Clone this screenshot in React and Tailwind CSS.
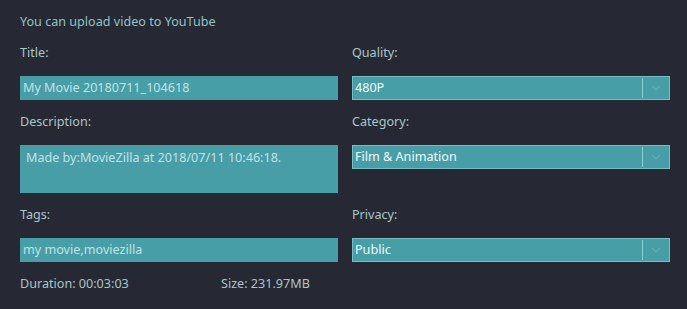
import React from "react";

const font = { fontFamily: '"Noto Sans", "Open Sans", sans-serif' };

function Label({ children }) {
  return (
    <div className="h-[45px] flex items-center text-[12.6px] text-[#a9c6c9]">{children}</div>
  );
}

function Input({ value }) {
  return (
    <div className="bg-[#479ea7] text-[12.6px] text-[#c3e1e3] px-[3px] flex h-[24px] items-center">
      {value}
    </div>
  );
}

function Select({ value }) {
  return (
    <div className="h-[24px] bg-[#479ea7] border border-[#73bfc5] flex items-stretch text-[12.6px] text-[#f2fafa]">
      <div className="flex-1 flex items-center pl-[2px]">{value}</div>
      <div className="w-px bg-[#8ccfd3] my-[1px]" />
      <div className="w-[26px] flex items-center justify-center">
        <svg width="10" height="6" viewBox="0 0 10 6" fill="none">
          <path d="M1 1l4 4 4-4" stroke="#62acb3" strokeWidth="1.2" />
        </svg>
      </div>
    </div>
  );
}

export default function App() {
  return (
    <div style={font} className="w-[687px] h-[309px] bg-[#262934] overflow-hidden pl-[20px] pr-[17px]">
      <div className="h-[31px] pt-[14px] text-[12.6px] leading-[16px] text-[#8fc4c8]">
        You can upload video to YouTube
      </div>
      <div className="flex gap-[14px]">
        <div className="w-[318px] flex flex-col">
          <Label>Title:</Label>
          <Input value="My Movie 20180711_104618" />
          <Label>Description:</Label>
          <div className="h-[48px] bg-[#479ea7] text-[12.6px] text-[#c3e1e3] px-[6px] pt-[4px]">
            Made by:MovieZilla at 2018/07/11 10:46:18.
          </div>
          <Label>Tags:</Label>
          <Input value="my movie,moviezilla" />
        </div>
        <div className="w-[318px] flex flex-col">
          <Label>Quality:</Label>
          <Select value="480P" />
          <Label>Category:</Label>
          <div className="h-[48px]">
            <Select value="Film & Animation" />
          </div>
          <Label>Privacy:</Label>
          <Select value="Public" />
        </div>
      </div>
      <div className="h-[44px] flex items-center text-[12.6px] text-[#a9c6c9]">
        <div className="w-[201px]">Duration: 00:03:03</div>
        <div>Size: 231.97MB</div>
      </div>
    </div>
  );
}
